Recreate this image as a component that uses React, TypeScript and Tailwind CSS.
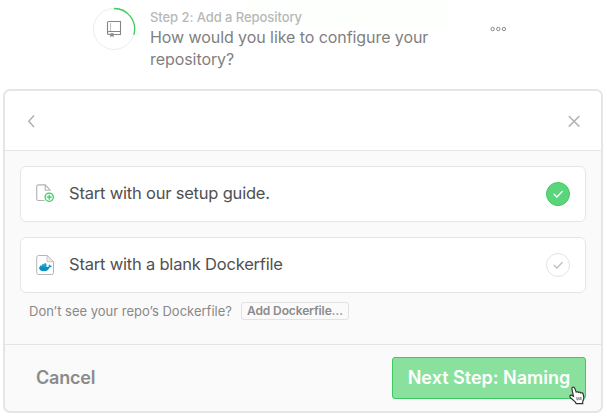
import React from "react";

function Check({ color }: { color: string }) {
  return (
    <svg width="24" height="24" viewBox="0 0 24 24" fill="none" className="block shrink-0">
      <path d="M7.7 11.9l3.2 3.1 5.7-5.9" stroke={color} strokeWidth="1.3" />
    </svg>
  );
}

function BookProgress() {
  return (
    <svg width="44" height="44" viewBox="0 0 44 44" fill="none" className="block shrink-0">
      <circle cx="22" cy="22" r="20.5" stroke="#ededed" />
      <path d="M22 1.5A20.5 20.5 0 0 1 41.8 27.8" stroke="#3bcb60" strokeWidth="1.3" />
      <g stroke="#858585" strokeWidth="1.1">
        <path d="M18.5 27.5h-1.7a1.3 1.3 0 0 1-1.3-1.3V15.8a1.3 1.3 0 0 1 1.3-1.3h11.7v13h-6.7M15.5 25.8c.2-.7.7-1.3 1.3-1.3h11.7" />
        <path d="M18.5 16.5v7" strokeDasharray="1 1" />
      </g>
      <path d="M18.3 26.3h3.4v3.9L20 28.9l-1.7 1.3Z" fill="#858585" />
    </svg>
  );
}

function PlusFile() {
  return (
    <svg width="19" height="20" viewBox="0 0 19 20" fill="none" className="block">
      <path d="M8.5 16.5h-6A1.8 1.8 0 0 1 .7 14.7v-12A1.8 1.8 0 0 1 2.5.9h6.7l5.2 5.4M9.2 1v5.3h5.2" stroke="#b2b2b2" strokeWidth="1.1" />
      <circle cx="13.2" cy="13.2" r="4.1" fill="white" stroke="#32ce5a" strokeWidth="1.3" />
      <path d="M10.7 13.2h5M13.2 10.7v5" stroke="#32ce5a" strokeWidth="1.2" />
    </svg>
  );
}

function DockerFile() {
  return (
    <svg width="19" height="22" viewBox="0 0 19 22" fill="none" className="block">
      <path d="M2.7 1.5h8.2l6.6 6.2v10.8a2 2 0 0 1-2 2H2.7a2 2 0 0 1-2-2v-15a2 2 0 0 1 2-2Z" fill="white" stroke="#b5b5b5" />
      <path d="M11 1.5v6.2h6.5Z" fill="#eeeeee" stroke="#b5b5b5" strokeWidth=".7" />
      <path d="M3 13h8.8c.8 0 1.1-.5.8-1.5l.8-.9c.6.4.9.9.8 1.3.7-.2 1.2 0 1.6.3-.4.8-1.2 1.1-2.1 1.1-1 2.6-2.8 3.9-5.9 3.9-3 0-4.6-1.2-4.8-4.2Z" fill="#078fc1" />
      <path d="M4 11.4h6.5v1.7H4zM6 10.2h4.5v1.3H6zM8.4 9.2h1.8v1.2H8.4z" fill="#1c9ccb" />
    </svg>
  );
}

function Cursor() {
  return (
    <svg width="17" height="19" viewBox="0 0 17 19" className="absolute left-[569px] top-[386px]">
      <path d="M3.6 1.3c.9-.5 1.8 0 2.1.8l1.5 4c.8-.6 1.7-.4 2.2.3.8-.6 1.8-.3 2.2.5 1-.4 2.2 0 2.5 1l.7 3.2c.2 1.9-.1 3-1.1 4.3v2.2H7.1L6.4 16 1.3 11.5c-.8-.9-.4-2.2.7-2.3.9-.1 1.7.5 2.4 1L2.9 3c-.2-.7.1-1.4.7-1.7Z" fill="white" stroke="#333" strokeWidth="1.2" />
      <path d="M7.8 11.3l.5 3M9.9 11.1l.2 3M11.9 11v3" stroke="#333" strokeWidth=".8" fill="none" />
    </svg>
  );
}

function Option({ icon, label, selected }: { icon: React.ReactNode; label: string; selected?: boolean }) {
  return (
    <div className="flex h-14 items-center rounded-md border border-[#e5e5e5] bg-white px-[15px]">
      <div className="w-[33px]">{icon}</div>
      <span className="grow pb-0.5 whitespace-nowrap text-[16.5px] leading-6 tracking-[-0.2px] text-[#505050]">{label}</span>
      <div className={selected
        ? "flex size-6 items-center justify-center rounded-full border border-[#3bcb60] bg-[#5bd57b]"
        : "flex size-6 items-center justify-center rounded-full border border-[#e2e2e2] bg-white"}>
        <Check color={selected ? "#fff" : "#bcbcbc"} />
      </div>
    </div>
  );
}

export default function App() {
  return (
    <div className="relative h-[416px] w-[607px] overflow-hidden bg-white font-['Inter','Liberation_Sans',sans-serif]">
      <div className="absolute left-[247px] top-0 h-[26px] w-[202px] bg-[#fcfffc] pl-4">
        <span className="block whitespace-nowrap text-[17.5px] leading-[12px] font-semibold text-white">Create Template</span>
      </div>
      <header className="relative flex h-[89px] pl-[92px] pt-[7px]">
        <BookProgress />
        <div className="ml-3.5 w-[330px] pt-px">
          <div className="h-[18px] whitespace-nowrap text-[13px] leading-[18px] font-medium tracking-[-0.07px] text-[#b8b8b8]">Step 2: Add a Repository</div>
          <div className="whitespace-nowrap text-[16px] leading-[22px] tracking-[-0.07px] text-[#808080]">How would you like to configure your<br />repository?</div>
        </div>
        <svg width="16" height="6" viewBox="0 0 16 6" className="ml-[10px] mt-[19px]" fill="none" stroke="#8c8c8c">
          <circle cx="2.7" cy="3" r="1.7" /><circle cx="8.3" cy="3" r="1.7" /><circle cx="13.9" cy="3" r="1.7" />
        </svg>
      </header>
      <main className="ml-[3px] flex h-[324px] w-[600px] flex-col overflow-hidden rounded-[7px] border-2 border-[#e5e5e5] bg-[#fafafa]">
        <div className="flex h-[60px] shrink-0 items-center justify-between border-b border-[#e5e5e5] bg-white pl-[22px] pr-[20px]">
          <svg width="9" height="14" viewBox="0 0 9 14" fill="none" stroke="#b0b0b0" strokeWidth="1.5"><path d="M7 1.5L1.8 7.3 7 13" /></svg>
          <svg width="14" height="14" viewBox="0 0 14 14" fill="none" stroke="#b3b3b3" strokeWidth="1.5"><path d="M1.8 2l10.6 10.6M12.4 2L1.8 12.6" /></svg>
        </div>
        <section className="flex h-[193px] shrink-0 flex-col px-[15px] pt-[15px]">
          <div className="flex flex-col gap-[15px]">
            <Option icon={<PlusFile />} label="Start with our setup guide." selected />
            <Option icon={<DockerFile />} label="Start with a blank Dockerfile" />
          </div>
          <div className="mt-2 flex h-5 items-center pl-[9px]">
            <span className="w-[212px] whitespace-nowrap text-[13px] leading-4 text-[#888]">Don’t see your repo’s Dockerfile?</span>
            <button className="flex h-[18px] w-[108px] items-center justify-center rounded-[3px] border border-[#e2e2e2] bg-[#fafafa] text-xs font-semibold tracking-[-0.12px] whitespace-nowrap text-[#8b8b8b]">Add Dockerfile…</button>
          </div>
        </section>
        <footer className="flex grow items-center justify-between border-t border-[#e5e5e5] pl-[31px] pr-[15px]">
          <button className="text-[18px] leading-6 font-semibold tracking-[-0.2px] text-[#8b8b8b]">Cancel</button>
          <button className="h-[42px] w-[194px] rounded-[3px] border border-[#3bcb60] bg-[#89e19d] text-[18px] leading-6 font-semibold whitespace-nowrap text-white">Next Step: Naming</button>
        </footer>
      </main>
      <Cursor />
    </div>
  );
}
